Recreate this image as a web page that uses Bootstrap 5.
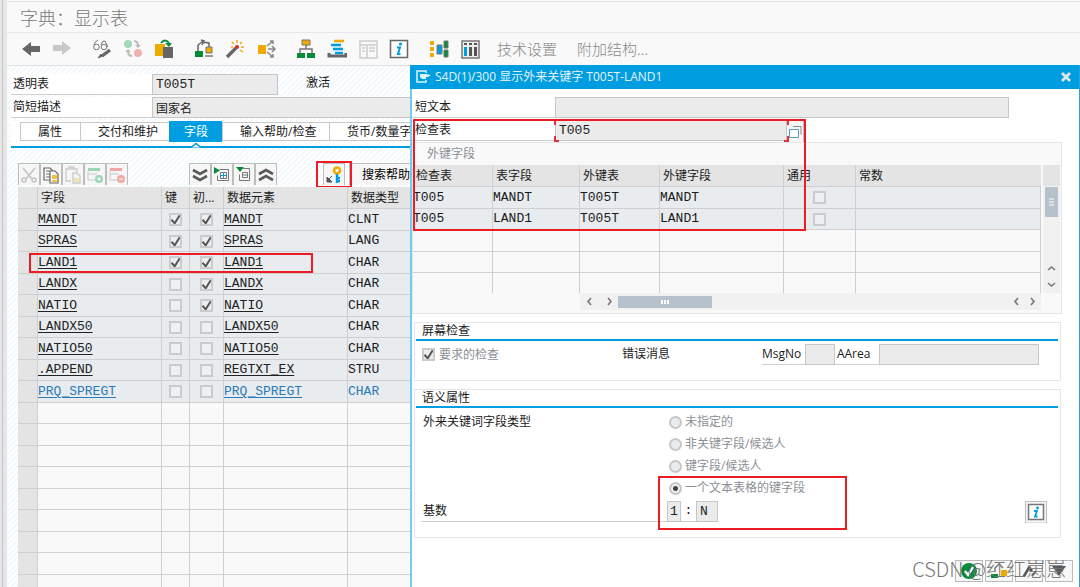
<!DOCTYPE html>
<html lang="zh-CN">
<head>
<meta charset="utf-8">
<meta name="viewport" content="width=device-width, initial-scale=1">
<title>字典：显示表</title>
<link href="https://cdn.jsdelivr.net/npm/bootstrap@5.3.0/dist/css/bootstrap.min.css" rel="stylesheet">
<style>
:root{--sap:#009de0;--line:#cfcfcf;--field:#ebebeb;--head:#e4e4e4;--row:#e8ecef;--red:#ed1c24}
body{font:12px/18px "Open Sans","Noto Sans CJK SC",sans-serif;color:#1a1a1a;background:#e6e6e6;overflow:hidden}
.app{margin-left:7px;background:#fff;box-shadow:-4px 0 0 #e6e6e6,-5px 0 0 #c4c4c4}
.app-title{height:32px;margin-top:1px;background:#f9f9f9;border-top:1px solid #e0e0e0;border-bottom:1px solid #e6e6e6;font:300 18px/31px "Noto Sans CJK SC",sans-serif;color:#777;padding-left:13px}
.toolbar{height:33px;background:#f9f9f9;border-bottom:1px solid #e2e2e2;padding-left:8px}
.tool{width:31px;height:28px;padding:0;border:0;display:flex;align-items:center;justify-content:center}
.tool-sep{margin-left:9px}
.tool-text{font:300 15px/28px "Noto Sans CJK SC",sans-serif;color:#888;padding:0;border:0}
.work{background:repeating-linear-gradient(135deg,#fff 0 2px,#f3fafe 2px 4px);padding-top:8px}
.line-label{border-bottom:1px solid var(--line);height:21px;line-height:20px;background:#fff}
.w-label{width:141px;padding-left:2px}
.row-gap-field{margin-bottom:2px}
.sap-field{height:21px;border:1px solid #c6c6c6;background:var(--field);border-radius:0;padding:0 3px;color:#222;outline:0;min-width:0}
.code{font-family:"Liberation Mono","Noto Sans CJK SC",monospace;font-size:13px}
.tabs{border-bottom:2px solid var(--sap);height:27px;margin:3px 0 0 4px;padding:1px 0 0 9px;background:#fff}
.tab-item{height:19px;line-height:17px;border:1px solid #c8c8c8;border-right:0;background:#fff;padding:0 0 0 17px;text-align:left;border-radius:0;white-space:nowrap;color:#1a1a1a;font-size:12px}
.tab-item.active{background:var(--sap);border-color:var(--sap);color:#fff;height:21px;margin-top:-1px;padding:0;text-align:center;line-height:19px;position:relative}
.notch{position:absolute;left:21px;top:20px}
.tbtn{width:22px;height:22px;background:#f6f6f6;border:1px solid #bdbdbd;border-bottom:0;border-radius:0;padding:0;display:flex;align-items:center;justify-content:center;flex:none}
.table-bar{margin:14px 0 0 11px;height:25px;padding-top:1px}
.grid{border-collapse:separate;border-spacing:0;table-layout:fixed;width:100%}
.grid th{background:var(--head);font-weight:400;height:22px;padding:0 0 0 3px;border-right:1px solid var(--line);border-bottom:1px solid var(--line);line-height:18px;white-space:nowrap}
.grid td{background:#f9f9f9;height:22px;padding:0;border-right:1px solid var(--line);border-bottom:1px solid var(--line);line-height:16px;white-space:nowrap;vertical-align:middle}
.grid tbody tr:nth-child(even) td{height:21px}
.grid tr.full td{background:var(--row)}
.grid td.pick{background:var(--head)!important}
.grid a{color:#222;text-underline-offset:2px}
.grid tr.ext a,.grid tr.ext{color:#2a7ab8}
.tick{appearance:none;display:block;margin:0 auto;width:13px;height:13px;border:2px solid #cbcbcb;background:#eef0f1;border-radius:0;flex:none;opacity:1}
.tick:checked{background:#eee url("data:image/svg+xml,%3Csvg xmlns='http://www.w3.org/2000/svg' viewBox='0 0 10 10'%3E%3Cpath d='M1 5l3 3.4L8.8.8' fill='none' stroke='%23555' stroke-width='1.9'/%3E%3C/svg%3E") center/10px no-repeat}
.mark-box{position:absolute;border:2px solid var(--red);pointer-events:none}
.dialog{position:absolute;left:410px;right:0;top:65px;bottom:0;background:#fff;border-left:2px solid #6fcdf2;border-right:1px solid #26a5d8}
.dialog-head{height:24px;background:var(--sap);color:#e4f4fc;padding:0 7px 0 2px;margin-left:-2px}
.dlg-label{width:143px;padding-left:3px}
.panel{margin-right:17px;background:#f9f9f9;border:1px solid #e6e6e6;height:172px;display:grid;grid-template-columns:1fr 20px;grid-template-rows:22px 128px 20px}
.refgrid th{height:22px;padding-left:3px}
.refgrid tr:last-child td{border-bottom:0;height:20px}
.vtrack{margin:0 1px 0 2px}
.sbtn{width:17px;height:17px;border:0;padding:0;background:#f1f1f1;display:flex;align-items:center;justify-content:center;flex:none}
.vthumb{width:13px;height:30px;background:#b7c1cc;margin:1px auto 0}
.hthumb{width:94px;height:12px;background:#b7c1cc}
.group{margin:0 18px 0 2px;border:1px solid #e6e6e6}
.group h2{font-size:12px;line-height:16px;margin:0 2px 0 1px;padding-left:6px;border-bottom:2px solid var(--sap);font-weight:400}
.muted{color:#8b8f96}
.dot{appearance:none;width:13px;height:13px;border:2px solid #c6c6c6;border-radius:50%;background:#e8ecef;margin:0 3px 0 0}
.dot:checked{background:radial-gradient(circle,#444 0 2px,#eee 3px)}
.choice{height:22px}
.foot-btn{width:28px;height:22px;border:1px solid #bbb;border-radius:0;background:#f7f7f7;padding:0;display:flex;align-items:center;justify-content:center}
.credit{position:absolute;right:13px;bottom:4px;font:300 20px/28px "Noto Sans CJK SC",sans-serif;color:#777;white-space:nowrap;pointer-events:none}
</style>
</head>
<body class="vh-100">
<div class="app vh-100 position-relative overflow-hidden">
  <header>
    <h1 class="app-title mb-0">字典：显示表</h1>
    <nav class="toolbar d-flex align-items-center" aria-label="工具栏">
      <button class="btn tool" aria-label="返回"><svg width="20" height="20"><path d="M1 10l9-7v4h9v6h-9v4z" fill="#666"/></svg></button>
      <button class="btn tool" aria-label="前进"><svg width="20" height="20"><path d="M19 9l-9-7v4H1v6h9v4z" fill="#c8c8c8"/></svg></button>
      <button class="btn tool tool-sep" aria-label="显示/更改"><svg width="20" height="20" fill="none" stroke="#777"><circle cx="4.500" cy="8" r="2.800"/><circle cx="12" cy="8" r="2.800"/><path d="M2 6Q3 2 6 1M9 6Q10 1 13 2l3 6"/><path d="M18 11l-8 6" stroke="#666" stroke-width="3.400"/><path d="M9 15l-3 4 5-2z" fill="#444"/></svg></button>
      <button class="btn tool" aria-label="激活"><svg width="20" height="20"><circle cx="5" cy="5" r="4" fill="#a7d8bc"/><circle cx="15" cy="14" r="4" fill="#f0b0b0"/><path d="M11 2q4 0 4 5M9 17q-4 0-4-5" fill="none" stroke="#bbb" stroke-width="2"/><path d="M12 6h6l-3 3zM2 13h6l-3-3z" fill="#bbb"/></svg></button>
      <button class="btn tool" aria-label="复制"><svg width="20" height="20"><path d="M1 5h10v12H1z" fill="#f0ab00"/><path d="M9 8h10v11H9z" fill="#666"/><path d="M7 4q4-5 8 0" fill="none" stroke="#078a3a" stroke-width="2"/><path d="M11 4h7l-3 4z" fill="#078a3a"/></svg></button>
      <button class="btn tool tool-sep" aria-label="使用位置"><svg width="20" height="20"><path d="M1 12h8v6H1z" fill="#078a3a"/><path d="M4 12V6l4-3 7 1v4M7 1l3 1-2 4" fill="none" stroke="#666" stroke-width="1.500"/><path d="M12 8h6v6h-6z" fill="#f0ab00" stroke="#777"/><path d="M11 17h8" stroke="#777" stroke-width="1.500"/></svg></button>
      <button class="btn tool" aria-label="检查"><svg width="20" height="20"><path d="M2 18l9-9" stroke="#666" stroke-width="3.400"/><circle cx="12" cy="8" r="2" fill="#d9232e"/><path d="M12 1v3M7 3l2 2M17 3l-2 2M16 8h3M15 11l3 2M6 8h2" stroke="#f0ab00" stroke-width="1.500"/></svg></button>
      <button class="btn tool" aria-label="层次"><svg width="20" height="20"><path d="M2 6h8v9H2z" fill="#f0ab00"/><path d="M11 7l6-5M12 10h7M11 13l6 5M14 2h3v3M16 7l3 3-3 3M14 18h3v-3" fill="none" stroke="#888" stroke-width="1.500"/></svg></button>
      <button class="btn tool tool-sep" aria-label="对象列表"><svg width="20" height="20"><path d="M6 1h8v5H6z" fill="#f0ab00" stroke="#777"/><path d="M10 6v4M4 14v-4h12v4" fill="none" stroke="#777" stroke-width="1.500"/><path d="M1 14h8v5H1zM11 14h8v5h-8z" fill="#078a3a"/></svg></button>
      <button class="btn tool" aria-label="导航"><svg width="20" height="20" fill="none" stroke-width="2.600"><path d="M7 2h10" stroke="#f0ab00"/><path d="M4 6h10M6 10h10M8 14h8" stroke="#009de0"/><path d="M2 14v3h17v-3" stroke="#666" stroke-width="3"/></svg></button>
      <button class="btn tool" aria-label="明细"><svg width="20" height="20" fill="none" stroke="#ccc" stroke-width="1.500"><path d="M2 2h17v17H2zM2 6h17M9 6v13M4 9h3M4 12h3M11 9h6M11 12h6"/></svg></button>
      <button class="btn tool" aria-label="信息"><svg width="20" height="20"><path d="M1.500 1.500h17v17h-17z" fill="#fff" stroke="#666" stroke-width="1.500"/><circle cx="11.500" cy="5" r="1.600" fill="#009de0"/><path d="M8 8.500h3l-2 6.500h2.500" fill="none" stroke="#009de0" stroke-width="2"/></svg></button>
      <button class="btn tool tool-sep" aria-label="显示图形"><svg width="20" height="20"><path d="M1 2h4v4H1zM1 8h4v4H1zM1 14h4v4H1z" fill="#f0ab00"/><path d="M8 6h5v9H8z" fill="#009de0" stroke="#777"/><path d="M15 2h4v7h-4zM15 11h4v7h-4z" fill="#078a3a" stroke="#777"/></svg></button>
      <button class="btn tool" aria-label="内容"><svg width="20" height="20"><path d="M2 2h17v17H2z" fill="#eee" stroke="#777" stroke-width="1.500"/><path d="M4 4h3v2H4zM9 4h3v2H9zM14 4h3v2h-3zM9 8h3v9H9zM14 8h3v9h-3z" fill="#555"/><path d="M4 8h3v9H4z" fill="#009de0"/></svg></button>
      <button class="btn tool-text ms-2 ps-1 me-1">技术设置</button>
      <button class="btn tool-text ms-3">附加结构...</button>
    </nav>
  </header>

  <main class="work h-100">
    <div class="d-flex ms-1 row-gap-field">
      <label class="line-label w-label" for="tabname">透明表</label>
      <input id="tabname" class="sap-field code" size="15" style="width:126px" value="T005T" readonly>
      <span class="ms-4 ps-1">激活</span>
    </div>
    <div class="d-flex ms-1">
      <label class="line-label w-label" for="descr">简短描述</label>
      <input id="descr" class="sap-field flex-grow-1" value="国家名" readonly>
    </div>
    <div class="tabs d-flex" role="tablist">
      <button class="tab-item" role="tab" style="width:60px">属性</button>
      <button class="tab-item" role="tab" style="width:89px">交付和维护</button>
      <button class="tab-item active" role="tab" style="width:53px">字段<svg class="notch" width="10" height="6"><path d="M0 5.500l5-4 5 4" fill="#fff" stroke="#009de0" stroke-width="1.600"/></svg></button>
      <button class="tab-item" role="tab" style="width:107px">输入帮助/检查</button>
      <button class="tab-item flex-grow-1" role="tab">货币/数量字段</button>
    </div>
    <div class="table-bar d-flex position-relative">
      <div class="d-flex">
        <button class="tbtn" aria-label="剪切"><svg width="18" height="18" fill="none" stroke="#c4c4c4" stroke-width="1.600"><path d="M3 2l9 11M15 2L6 13"/><circle cx="4" cy="14" r="2"/><circle cx="14" cy="14" r="2"/></svg></button>
        <button class="tbtn" aria-label="复制行"><svg width="18" height="18" fill="#fff" stroke="#666" stroke-width="1.200"><path d="M2 2h6l3 3v9H2zM4 5h4M4 8h4M4 11h4"/><path d="M8 5h5l3 3v9H8z"/><path d="M10 10h5M10 12h5M10 15h5" stroke="#f0ab00" stroke-width="1.500"/></svg></button>
        <button class="tbtn" aria-label="粘贴"><svg width="18" height="18" fill="none" stroke="#ccc" stroke-width="1.400"><path d="M7 15H2V3h11v3M5 3V1h5v2M9 7h4l3 3v7H9z"/><path d="M10 13h5M10 15h5" stroke="#f5dc9a"/></svg></button>
        <button class="tbtn" aria-label="插入行"><svg width="18" height="18"><path d="M2 2h12v3H2z" fill="#9bd5b3"/><path d="M2 8h9M2 5v9h7" stroke="#c8c8c8" fill="none"/><circle cx="13" cy="13" r="4" fill="#9bd5b3"/><path d="M11 13h4M13 11v4" stroke="#fff"/></svg></button>
        <button class="tbtn" aria-label="删除行"><svg width="18" height="18"><path d="M2 2h12v3H2z" fill="#efa7a7"/><path d="M2 8h9M2 5v9h7" stroke="#c8c8c8" fill="none"/><circle cx="13" cy="13" r="4" fill="#efa7a7"/><path d="M11 13h4" stroke="#fff"/></svg></button>
      </div>
      <div class="d-flex" style="margin-left:61px">
        <button class="tbtn" aria-label="全部展开"><svg width="18" height="18" fill="none" stroke="#5a5a5a" stroke-width="2.600"><path d="M2 4l7 4 7-4M2 10l7 4 7-4"/></svg></button>
        <button class="tbtn" aria-label="展开"><svg width="18" height="18" fill="none" stroke="#777"><path d="M6.500 3.500h9v11h-11v-5"/><path d="M7.500 6.500h6v6h-6z"/><path d="M8 9.500h5M10.500 7v5" stroke="#009de0"/><path d="M1 1l6 3.500L1 8z" fill="#078a3a" stroke="none"/></svg></button>
        <button class="tbtn" aria-label="折叠"><svg width="18" height="18" fill="none" stroke="#777"><path d="M8 2.500h6.500v12h-10v-6"/><path d="M7.500 6.500h5v5h-5zM8 9h4"/><path d="M1 1h8L5 6z" fill="#078a3a" stroke="none"/></svg></button>
        <button class="tbtn" aria-label="全部折叠"><svg width="18" height="18" fill="none" stroke="#5a5a5a" stroke-width="2.600"><path d="M2 8l7-4 7 4M2 14l7-4 7 4"/></svg></button>
      </div>
      <div class="d-flex flex-grow-1" style="margin-left:46px">
        <button class="tbtn" aria-label="外键"><svg width="18" height="18"><circle cx="12" cy="4.500" r="3" fill="none" stroke="#f0ab00" stroke-width="2.600"/><path d="M12 8v9M12 12h3M12 15h3" stroke="#009de0" stroke-width="2.400"/><path d="M7 10l-3 3M2 11v5h5z" fill="#555" stroke="#555"/></svg></button>
        <button class="tbtn w-auto flex-grow-1 justify-content-start ms-1"><span style="font-size:12px;padding-left:12px">搜索帮助</span></button>
      </div>
      <div class="mark-box" style="left:298px;top:-1px;width:36px;height:27px"></div>
    </div>
    <div class="position-relative" style="margin-left:11px">
      <table class="grid" id="fields">
        <colgroup><col style="width:20px"><col style="width:124px"><col style="width:28px"><col style="width:34px"><col style="width:124px"><col></colgroup>
        <thead><tr><th></th><th>字段</th><th>键</th><th>初...</th><th>数据元素</th><th>数据类型</th></tr></thead>
        <tbody class="code"></tbody>
      </table>
      <div class="mark-box" style="left:11px;top:66px;width:284px;height:20px"></div>
    </div>
  </main>
</div>

<section class="dialog d-flex flex-column" role="dialog" aria-labelledby="dlg-title">
  <div class="dialog-head d-flex align-items-center">
    <svg class="ms-1 me-1" width="15" height="14" fill="none" stroke="#dff3fd" stroke-width="1.500"><path d="M10 3V1H1v11h9v-2"/><path d="M4 4h6l5 1-3 2h-2v2H6l-2-2z" fill="#dff3fd" stroke="none"/></svg>
    <span id="dlg-title">S4D(1)/300 显示外来关键字 T005T-LAND1</span>
    <button class="btn p-0 border-0 ms-auto d-flex" aria-label="关闭"><svg width="12" height="12"><path d="M2 2l8 8M10 2l-8 8" stroke="#e0e8ec" stroke-width="2.800"/></svg></button>
  </div>
  <div class="position-relative pt-2">
    <div class="d-flex row-gap-field" style="margin-right:70px">
      <label class="line-label dlg-label" for="short">短文本</label>
      <input id="short" class="sap-field flex-grow-1" readonly>
    </div>
    <div class="d-flex position-relative">
      <label class="line-label dlg-label" for="chk">检查表</label>
      <input id="chk" class="sap-field code" style="width:232px" value="T005" readonly>
      <button class="tbtn border-start-0" style="width:17px" aria-label="选择"><svg width="15" height="16" fill="#fff" stroke="#888"><path d="M5 2.500h8v8" fill="none"/><path d="M1.500 5.500h9v8h-9z" stroke="#5d9bb8"/></svg></button>
      <svg class="position-absolute" style="left:142px;top:-1px" width="235" height="23" fill="none" stroke="#e2333c" stroke-width="2"><path d="M5 1H1v5M1 17v5h4M230 1h4v5M234 17v5h-4"/></svg>
    </div>
    <div class="panel">
      <div class="muted" style="grid-column:1/3;padding:2px 0 0 14px">外键字段</div>
      <table class="grid refgrid" id="refs">
        <colgroup><col style="width:80px"><col style="width:87px"><col style="width:80px"><col style="width:124px"><col style="width:72px"><col></colgroup>
        <thead><tr><th>检查表</th><th>表字段</th><th>外键表</th><th>外键字段</th><th>通用</th><th class="border-end-0">常数</th></tr></thead>
        <tbody class="code"></tbody>
      </table>
      <div class="vtrack d-flex flex-column">
        <div style="height:21px;background:#e4e4e4"></div>
        <div class="flex-grow-1" style="background:#f1f1f1"><div class="vthumb d-flex align-items-center justify-content-center"><svg width="5" height="8"><path d="M0 1h5M0 4h5M0 7h5" stroke="#fff"/></svg></div></div>
        <button class="sbtn" aria-label="上"><svg width="9" height="6"><path d="M1 5l3.500-3L8 5" fill="none" stroke="#777" stroke-width="1.600"/></svg></button>
        <button class="sbtn" aria-label="下"><svg width="9" height="6"><path d="M1 1l3.500 3L8 1" fill="none" stroke="#777" stroke-width="1.600"/></svg></button>
      </div>
      <div class="d-flex align-items-center" style="margin-left:167px;background:#f1f1f1;height:17px">
        <button class="sbtn" aria-label="左"><svg width="6" height="9"><path d="M5 1L2 4.500 5 8" fill="none" stroke="#777" stroke-width="1.600"/></svg></button>
        <button class="sbtn ms-1" aria-label="右"><svg width="6" height="9"><path d="M1 1l3 3.500L1 8" fill="none" stroke="#777" stroke-width="1.600"/></svg></button>
        <div class="hthumb d-flex align-items-center justify-content-center"><svg width="8" height="4"><path d="M1 0v4M4 0v4M7 0v4" stroke="#fff" stroke-width="2"/></svg></div>
        <button class="sbtn ms-auto" aria-label="左端"><svg width="6" height="9"><path d="M5 1L2 4.500 5 8" fill="none" stroke="#777" stroke-width="1.600"/></svg></button>
        <button class="sbtn" aria-label="右端"><svg width="6" height="9"><path d="M1 1l3 3.500L1 8" fill="none" stroke="#777" stroke-width="1.600"/></svg></button>
      </div>
    </div>
    <div class="mark-box" style="left:1px;top:30px;width:393px;height:112px"></div>
  </div>

  <div class="group" style="margin-top:8px;height:59px">
    <h2>屏幕检查</h2>
    <div class="d-flex" style="padding:3px 21px 0 7px">
      <div class="d-flex align-items-center" style="width:203px"><input type="checkbox" class="tick m-0 me-1" id="req" checked><label class="muted" for="req">要求的检查</label></div>
      <span style="width:142px;line-height:20px">错误消息</span>
      <label class="line-label" for="msg" style="width:44px">MsgNo</label>
      <input id="msg" class="sap-field" style="width:30px" readonly>
      <label class="line-label" for="area" style="width:45px;padding-left:2px">AArea</label>
      <input id="area" class="sap-field flex-grow-1" readonly>
    </div>
  </div>

  <div class="group position-relative" style="margin-top:8px;height:149px">
    <h2>语义属性</h2>
    <div class="d-flex" style="padding:3px 0 2px 8px">
      <span style="width:246px;line-height:22px">外来关键词字段类型</span>
      <div>
        <div class="choice d-flex align-items-center"><input class="dot" type="radio" name="kind" id="k1"><label class="muted" for="k1">未指定的</label></div>
        <div class="choice d-flex align-items-center"><input class="dot" type="radio" name="kind" id="k2"><label class="muted" for="k2">非关键字段/候选人</label></div>
        <div class="choice d-flex align-items-center"><input class="dot" type="radio" name="kind" id="k3"><label class="muted" for="k3">键字段/候选人</label></div>
        <div class="choice d-flex align-items-center"><input class="dot" type="radio" name="kind" id="k4" checked><label class="muted" for="k4">一个文本表格的键字段</label></div>
      </div>
    </div>
    <div class="d-flex" style="padding:0 13px 0 6px">
      <label class="line-label" for="left-card" style="width:246px;padding-left:2px">基数</label>
      <input id="left-card" class="sap-field code" style="width:14px;padding:0 2px" value="1" readonly>
      <span class="line-label code text-center" style="width:15px">:</span>
      <input class="sap-field code" aria-label="右基数" style="width:22px" value="N" readonly>
      <button class="tbtn ms-auto border-bottom" aria-label="信息"><svg width="18" height="18"><path d="M1.500 1.500h15v15h-15z" fill="#fff" stroke="#777" stroke-width="1.500"/><circle cx="10.500" cy="5" r="1.400" fill="#009de0"/><path d="M7 8h3l-2 5.500h2.500" fill="none" stroke="#009de0" stroke-width="1.800"/></svg></button>
    </div>
    <div class="mark-box" style="left:243px;top:86px;width:189px;height:54px"></div>
  </div>

  <div class="d-flex justify-content-end mt-auto" style="gap:2px;padding:0 6px 5px 0">
    <button class="btn foot-btn" aria-label="继续"><svg width="18" height="18"><circle cx="9" cy="9" r="8" fill="#078a3a"/><path d="M5 9l3 4 5-8" fill="none" stroke="#fff" stroke-width="2.400"/></svg></button>
    <button class="btn foot-btn" aria-label="使用位置"><svg width="18" height="18"><path d="M1 12h7v4H1z" fill="#078a3a"/><path d="M5 10V6l4-4 4 4" fill="none" stroke="#777" stroke-width="1.500"/><path d="M11 8h6v6h-6z" fill="#f0ab00"/></svg></button>
    <button class="btn foot-btn" aria-label="上一个"><svg width="18" height="18"><path d="M2 15L9 3l4 5-2 2-2-2-4 7z" fill="#555"/><path d="M12 14l4-5" stroke="#555" stroke-width="2"/></svg></button>
    <button class="btn foot-btn" aria-label="下一个"><svg width="18" height="18"><path d="M2 4h14L9 14z" fill="#555"/></svg></button>
  </div>
  <div class="credit">CSDN @红红崽崽</div>
</section>

<script src="https://cdn.jsdelivr.net/npm/bootstrap@5.3.0/dist/js/bootstrap.bundle.min.js"></script>
<script>
const fields = [
  ['MANDT',1,1,'MANDT','CLNT'],['SPRAS',1,1,'SPRAS','LANG'],['LAND1',1,1,'LAND1','CHAR'],
  ['LANDX',0,1,'LANDX','CHAR'],['NATIO',0,1,'NATIO','CHAR'],['LANDX50',0,0,'LANDX50','CHAR'],
  ['NATIO50',0,0,'NATIO50','CHAR'],['.APPEND',0,0,'REGTXT_EX','STRU'],['PRQ_SPREGT',0,0,'PRQ_SPREGT','CHAR']
];
const tick = (on, name) => `<input type="checkbox" class="tick" aria-label="${name}"${on ? ' checked' : ''}>`;
const blank = n => `<tr>${'<td></td>'.repeat(n)}</tr>`;
document.querySelector('#fields tbody').innerHTML = fields.map((f, i) =>
  `<tr class="full${i === 8 ? ' ext' : ''}"><td class="pick"></td><td><a href="#">${f[0]}</a></td><td>${tick(f[1], '键')}</td><td>${tick(f[2], '初始值')}</td><td><a href="#">${f[3]}</a></td><td>${f[4]}</td></tr>`
).join('') + blank(6).replace('<td>', '<td class="pick">').repeat(9);
document.querySelector('#refs tbody').innerHTML = [['T005','MANDT','T005T','MANDT'],['T005','LAND1','T005T','LAND1']].map(r =>
  `<tr class="full">${r.map(c => `<td>${c}</td>`).join('')}<td>${tick(0, '通用')}</td><td></td></tr>`
).join('') + blank(6).repeat(3);
</script>
</body>
</html>
